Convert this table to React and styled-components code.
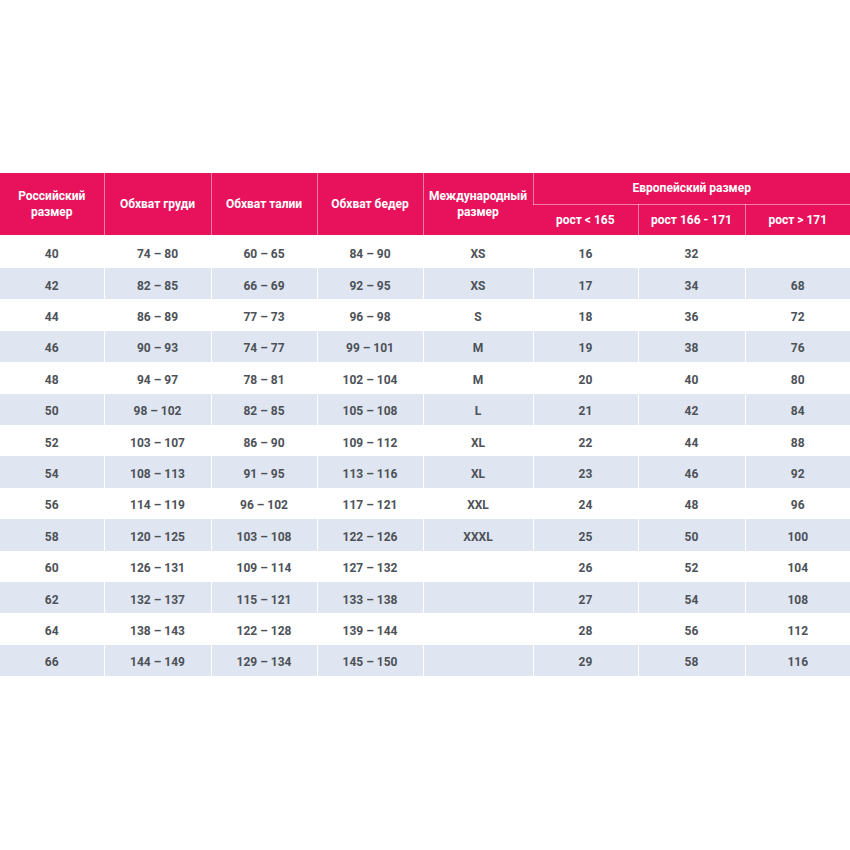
import styled, { createGlobalStyle } from 'styled-components'

const GlobalStyle = createGlobalStyle`
	html, body {
		margin: 0;
		padding: 0;
		background: #fff;
	}
	body {
		font-family: Roboto, 'Liberation Sans', sans-serif;
	}
`

const Page = styled.div`
	width: 850px;
	height: 850px;
	padding-top: 173px;
	box-sizing: border-box;
`

const Table = styled.table`
	width: 850px;
	border-collapse: collapse;
	table-layout: fixed;
`

const HeadCell = styled.th`
	background: #e8125c;
	color: #fff;
	font-size: 12px;
	font-weight: 700;
	line-height: 16px;
	height: 31px;
	padding: 0 4px;
	text-align: center;
	vertical-align: middle;
	border-left: 1px solid rgba(255, 255, 255, 0.45);
	border-bottom: ${({ $bottom }) => ($bottom ? '1px solid rgba(255, 255, 255, 0.45)' : 'none')};
	box-sizing: border-box;

	&:first-child {
		border-left: none;
	}
`

const Row = styled.tr`
	background: ${({ $striped }) => ($striped ? '#dfe6f1' : '#fff')};
`

const Cell = styled.td`
	height: 31.4px;
	padding: 4px 0 0;
	text-align: center;
	vertical-align: middle;
	font-size: 12px;
	font-weight: 700;
	color: #4d5158;
	border-left: 1px solid #fff;
	box-sizing: border-box;

	&:first-child {
		border-left: none;
	}

	tr:first-child > & {
		height: 33px;
		padding-top: 5px;
	}
`

const widths = [104, 107, 106, 106, 110, 105, 107, 105]

const rows = [
	['40', '74 – 80', '60 – 65', '84 – 90', 'XS', '16', '32', ''],
	['42', '82 – 85', '66 – 69', '92 – 95', 'XS', '17', '34', '68'],
	['44', '86 – 89', '77 – 73', '96 – 98', 'S', '18', '36', '72'],
	['46', '90 – 93', '74 – 77', '99 – 101', 'M', '19', '38', '76'],
	['48', '94 – 97', '78 – 81', '102 – 104', 'M', '20', '40', '80'],
	['50', '98 – 102', '82 – 85', '105 – 108', 'L', '21', '42', '84'],
	['52', '103 – 107', '86 – 90', '109 – 112', 'XL', '22', '44', '88'],
	['54', '108 – 113', '91 – 95', '113 – 116', 'XL', '23', '46', '92'],
	['56', '114 – 119', '96 – 102', '117 – 121', 'XXL', '24', '48', '96'],
	['58', '120 – 125', '103 – 108', '122 – 126', 'XXXL', '25', '50', '100'],
	['60', '126 – 131', '109 – 114', '127 – 132', '', '26', '52', '104'],
	['62', '132 – 137', '115 – 121', '133 – 138', '', '27', '54', '108'],
	['64', '138 – 143', '122 – 128', '139 – 144', '', '28', '56', '112'],
	['66', '144 – 149', '129 – 134', '145 – 150', '', '29', '58', '116'],
]

export default function App() {
	return (
		<Page>
			<GlobalStyle />
			<Table>
				<colgroup>
					{widths.map((w, i) => (
						<col key={i} style={{ width: w }} />
					))}
				</colgroup>
				<thead>
					<tr>
						<HeadCell rowSpan={2}>Российский<br />размер</HeadCell>
						<HeadCell rowSpan={2}>Обхват груди</HeadCell>
						<HeadCell rowSpan={2}>Обхват талии</HeadCell>
						<HeadCell rowSpan={2}>Обхват бедер</HeadCell>
						<HeadCell rowSpan={2}>Международный<br />размер</HeadCell>
						<HeadCell colSpan={3} $bottom>Европейский размер</HeadCell>
					</tr>
					<tr>
						<HeadCell>рост &lt; 165</HeadCell>
						<HeadCell>рост 166 - 171</HeadCell>
						<HeadCell>рост &gt; 171</HeadCell>
					</tr>
				</thead>
				<tbody>
					{rows.map((r, i) => (
						<Row key={i} $striped={i % 2 === 1}>
							{r.map((c, j) => (
								<Cell key={j}>{c}</Cell>
							))}
						</Row>
					))}
				</tbody>
			</Table>
		</Page>
	)
}
